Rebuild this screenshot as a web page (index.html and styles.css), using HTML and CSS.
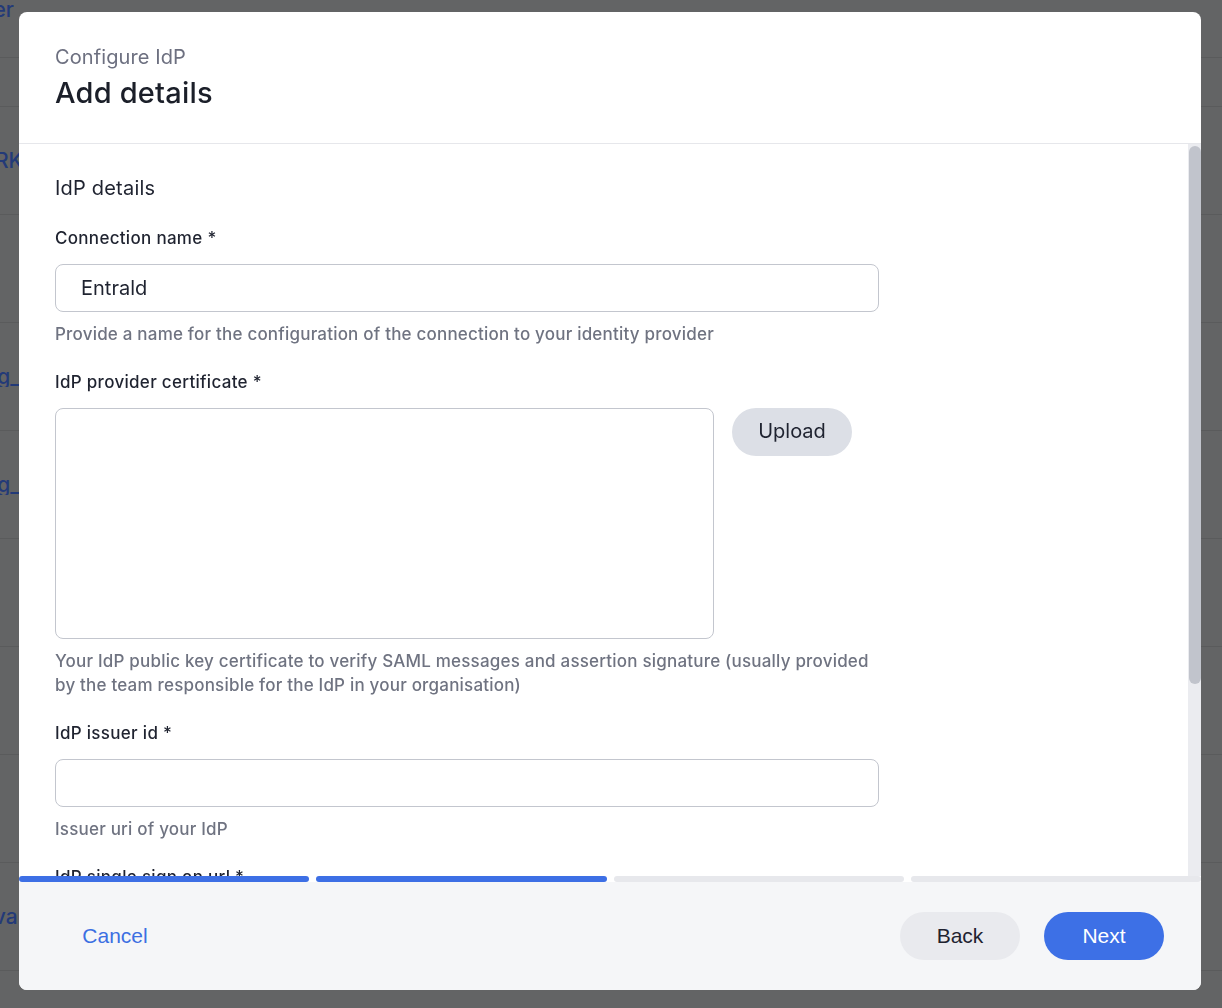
FILE: index.html
```html
<!DOCTYPE html>
<html>
<head>
	<meta charset="UTF-8">
	<title>Configure IdP</title>
	<link rel="stylesheet" href="styles.css">
</head>
<body>
	<!-- page list behind the dialog -->
	<div class="page">
		<div class="page-row page-row--top"><div class="page-cell page-cell--short">Owner</div></div>
		<div class="page-row page-row--head"></div>
		<div class="page-row"><div class="page-cell page-cell--wide">NETWORK</div></div>
		<div class="page-row"></div>
		<div class="page-row"><div class="page-cell">sso_config_g_</div></div>
		<div class="page-row"><div class="page-cell">sso_config_g_</div></div>
		<div class="page-row"></div>
		<div class="page-row"></div>
		<div class="page-row"></div>
		<div class="page-row"><div class="page-cell page-cell--wide">Approval</div></div>
	</div>

	<div class="backdrop"></div>

	<div class="modal">
		<header class="modal-header">
			<div class="modal-kicker">Configure IdP</div>
			<h1 class="modal-title">Add details</h1>
		</header>

		<div class="modal-body">
			<div class="modal-scroll">
				<h2 class="section-title">IdP details</h2>

				<div class="field">
					<label class="field-label" for="conn-name">Connection name *</label>
					<input class="text-input" id="conn-name" type="text" value="Entrald">
					<p class="field-help">Provide a name for the configuration of the connection to your identity provider</p>
				</div>

				<div class="field">
					<label class="field-label" for="cert">IdP provider certificate *</label>
					<div class="cert-row">
						<textarea class="text-area" id="cert"></textarea>
						<button class="btn btn-upload" type="button">Upload</button>
					</div>
					<p class="field-help">Your IdP public key certificate to verify SAML messages and assertion signature (usually provided by the team responsible for the IdP in your organisation)</p>
				</div>

				<div class="field">
					<label class="field-label" for="issuer">IdP issuer id *</label>
					<input class="text-input" id="issuer" type="text">
					<p class="field-help">Issuer uri of your IdP</p>
				</div>

				<div class="field">
					<label class="field-label" for="sso-url">IdP single sign on url *</label>
					<input class="text-input" id="sso-url" type="text">
					<p class="field-help">Single sign on url of your IdP</p>
				</div>
			</div>

			
			<div class="scrollbar">
				<div class="scrollbar-thumb"></div>
			</div>
		</div>

		<div class="steps">
			<span class="step step--done"></span>
			<span class="step step--done"></span>
			<span class="step"></span>
			<span class="step"></span>
		</div>

		<footer class="modal-footer">
			<button class="btn btn-link" type="button">Cancel</button>
			<div class="footer-actions">
				<button class="btn btn-secondary" type="button">Back</button>
				<button class="btn btn-primary" type="button">Next</button>
			</div>
		</footer>
	</div>
</body>
</html>
```

FILE: styles.css
```css
* {
	box-sizing: border-box;
}

body {
	margin: 0;
	height: 100vh;
	overflow: hidden;
	background: #636465;
	font-family: Inter, "Noto Sans", sans-serif;
}

/* page behind the dialog */

.page-row {
	display: flex;
	align-items: center;
	height: 108px;
	border-bottom: 1px solid #5a5b5c;
}

.page-row--top {
	height: 58px;
	align-items: flex-start;
}

.page-row--head {
	height: 49px;
}

.page-cell {
	display: flex;
	justify-content: flex-end;
	width: 20px;
	overflow: hidden;
	white-space: nowrap;
	font-size: 21px;
	line-height: 20px;
	font-weight: 500;
	color: #233a78;
}

.page-cell--short {
	width: 14px;
}

.page-cell--wide {
	width: 23px;
}

.backdrop {
	position: fixed;
	inset: 0;
}

/* dialog */

.modal {
	position: fixed;
	top: 12px;
	left: 19px;
	width: 1182px;
	height: 978px;
	display: flex;
	flex-direction: column;
	background: #fff;
	border-radius: 8px;
	overflow: hidden;
}

.modal-header {
	padding: 33px 36px 32px;
	border-bottom: 1px solid #e6e7eb;
}

.modal-kicker {
	font-size: 20px;
	line-height: 24px;
	letter-spacing: 0.1px;
	color: #6d7080;
}

.modal-title {
	margin: 6px 0 0;
	font-size: 29px;
	line-height: 36px;
	font-weight: 500;
	letter-spacing: 0.2px;
	color: #1b1f29;
}

.modal-body {
	flex: 1;
	min-height: 0;
	display: flex;
}

.modal-scroll {
	flex: 1;
	overflow: hidden;
	padding: 32px 36px 0;
}

.scrollbar {
	flex: none;
	width: 13px;
	background: #ebecf0;
}

.scrollbar-thumb {
	height: 538px;
	margin: 2px 0 0 1px;
	background: #c1c4cc;
	border-radius: 6px;
}

.section-title {
	margin: 0 0 26px;
	font-size: 20px;
	line-height: 24px;
	font-weight: 400;
	letter-spacing: 0.2px;
	color: #1f2330;
}

.field {
	margin-bottom: 24px;
	max-width: 824px;
}

.field-label {
	display: block;
	margin-bottom: 14px;
	font-size: 17px;
	line-height: 24px;
	font-weight: 500;
	letter-spacing: 0.3px;
	color: #1f2330;
}

.text-input,
.text-area {
	display: block;
	width: 100%;
	border: 1px solid #c3c6ce;
	border-radius: 8px;
	font-family: inherit;
	font-size: 20px;
	color: #1f2330;
	background: #fff;
	outline: none;
}

.text-input {
	height: 48px;
	padding: 0 25px;
}

.text-area {
	width: 659px;
	height: 231px;
	resize: none;
	padding: 12px 16px;
}

.cert-row {
	display: flex;
	align-items: flex-start;
	gap: 18px;
}

.field-help {
	margin: 10px 0 0;
	font-size: 17px;
	line-height: 24px;
	font-weight: 500;
	letter-spacing: 0.2px;
	color: #6f7381;
}

/* wizard progress */

.steps {
	display: flex;
	gap: 7px;
	height: 6px;
}

.step {
	flex: 1;
	border-radius: 3px;
	background: #e7e8ec;
}

.step--done {
	background: #3d6fe5;
}

/* footer */

.modal-footer {
	display: flex;
	align-items: center;
	justify-content: space-between;
	height: 108px;
	padding: 0 37px 0 36px;
	background: #f5f6f8;
}

.footer-actions {
	display: flex;
	gap: 24px;
}

.btn {
	height: 48px;
	width: 120px;
	border: 0;
	border-radius: 24px;
	font-family: "Liberation Sans", Arial, sans-serif;
	font-size: 21px;
	cursor: pointer;
}

.btn-upload {
	flex: none;
	padding: 0 0 3px;
	font-family: inherit;
	font-size: 20px;
	color: #1f2330;
	background: #dcdfe6;
}

.btn-link {
	padding-bottom: 2px;
	background: transparent;
	color: #3c6fe2;
}

.btn-secondary {
	padding-bottom: 2px;
	background: #e9eaee;
	color: #1f2330;
}

.btn-primary {
	padding-bottom: 2px;
	background: #3d70e6;
	color: #fff;
}
```
